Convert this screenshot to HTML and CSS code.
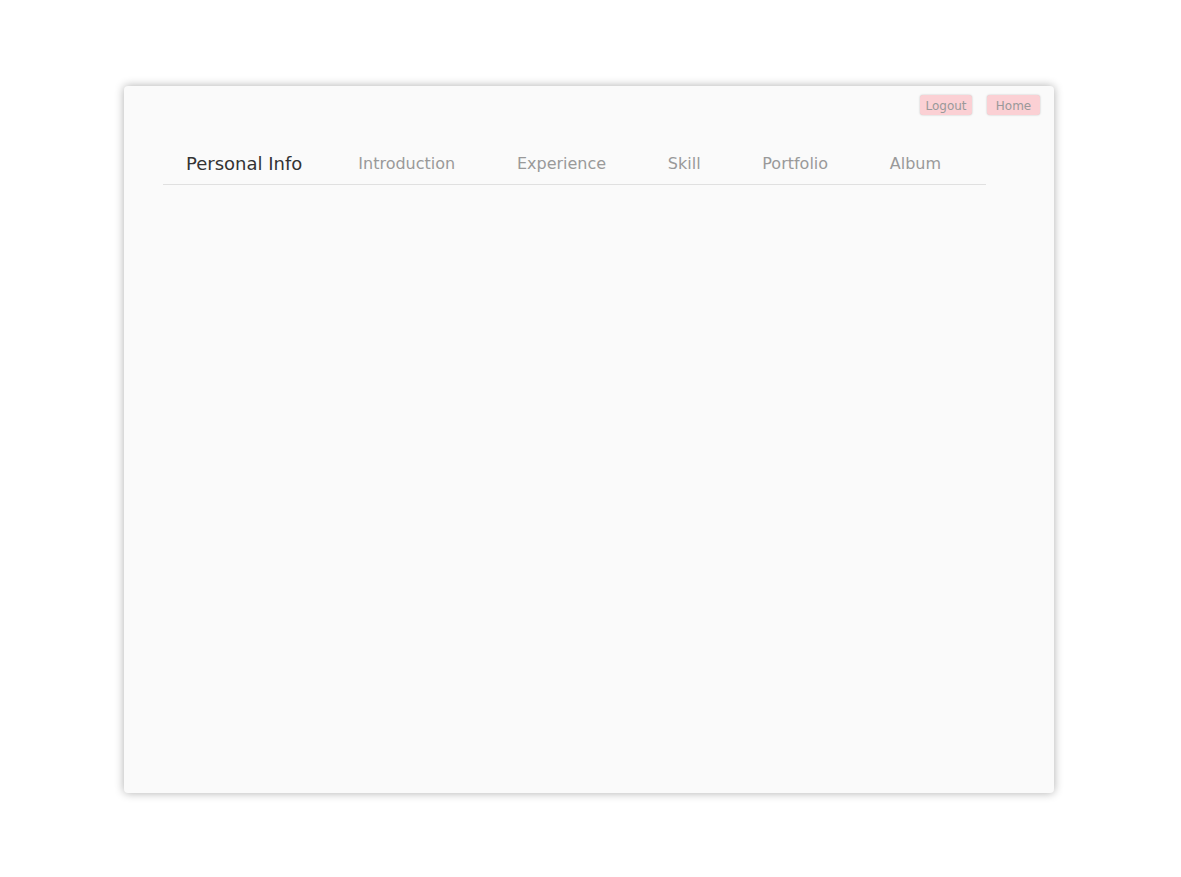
FILE: index.html
```html
<!DOCTYPE html>
<html>
<head>
<meta charset="utf-8">
<link rel="stylesheet" href="styles.css">
</head>
<body>
<div class="card">
  <div class="actions">
    <button class="btn">Logout</button>
    <button class="btn">Home</button>
  </div>
  <nav class="tabs">
    <span class="tab active">Personal Info</span>
    <span class="tab">Introduction</span>
    <span class="tab">Experience</span>
    <span class="tab">Skill</span>
    <span class="tab">Portfolio</span>
    <span class="tab">Album</span>
  </nav>
</div>
</body>
</html>
```
FILE: styles.css
```css
html, body {
  margin: 0;
  padding: 0;
  background: #fff;
  font-family: "DejaVu Sans", Verdana, sans-serif;
}
body {
  padding: 86px 0 40px 124px;
}
.card {
  width: 930px;
  height: 707px;
  box-sizing: border-box;
  background: #fafafa;
  border-radius: 4px;
  box-shadow: 0 0 10px rgba(0,0,0,0.32);
  padding: 9px 14px 0 39px;
}
.actions {
  display: flex;
  justify-content: flex-end;
  gap: 15px;
}
.btn {
  font-family: "DejaVu Sans", Verdana, sans-serif;
  font-size: 12px;
  line-height: 20px;
  color: #999;
  background: #fbd0d4;
  border: none;
  border-radius: 3px;
  box-shadow: 0 0 2px rgba(0,0,0,0.25);
  height: 20px;
  width: 52px;
  padding: 1px 0 0;
}
.btn + .btn { width: 53px; }
.tabs {
  display: flex;
  width: 823px;
  margin-top: 29px;
  border-bottom: 1px solid #e0e0e0;
  padding: 0 0 2px 23px;
  box-sizing: border-box;
  height: 41px;
  align-items: center;
}
.tab {
  flex-shrink: 0;
  white-space: nowrap;
  font-size: 16px;
  color: #999;
  margin-right: 61.7px;
}
.tab:last-child { margin-right: 0; }
.tab.active {
  font-size: 18px;
  color: #333;
  margin-right: 56px;
}
```
